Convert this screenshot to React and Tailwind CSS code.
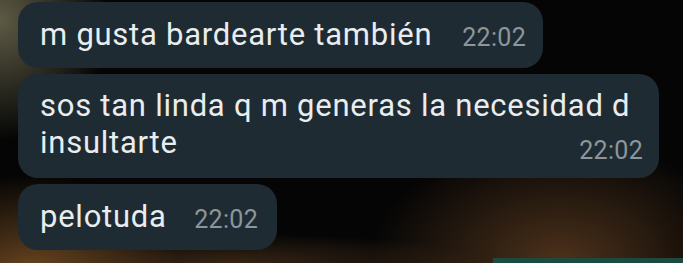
import React from "react";

const bg =
  "bg-[radial-gradient(ellipse_110px_120px_at_0px_20px,rgba(98,95,72,0.95),transparent),radial-gradient(ellipse_150px_100px_at_30px_275px,rgba(130,85,38,0.8),transparent),radial-gradient(ellipse_190px_120px_at_560px_260px,rgba(100,64,34,0.75),transparent),radial-gradient(ellipse_60px_70px_at_683px_250px,rgba(0,0,0,0.9),transparent),radial-gradient(ellipse_260px_30px_at_230px_263px,rgba(95,62,35,0.55),transparent),linear-gradient(#050505,#050505)]";

const Time = ({ children }) => (
  <span className="text-[25px] leading-[16px] tracking-[0.3px] text-[#8d969b] whitespace-nowrap">
    {children}
  </span>
);

const msgText = "text-[31px] leading-[37px] tracking-[0.75px] text-[#e9edef]";

export default function App() {
  return (
    <div
      className={`relative w-[683px] h-[263px] overflow-hidden ${bg}`}
      style={{ fontFamily: "Roboto, 'Liberation Sans', sans-serif" }}
    >
      <div className="flex flex-col items-start gap-[6px] pl-[18px] pt-[2px]">
        {/* first message */}
        <div className="flex items-end w-[525px] h-[66px] rounded-[20px] bg-[#1f2b32] pl-[22px] pr-[17px] pt-[13px] pb-[15px]">
          <span className={msgText}>m gusta bardearte también</span>
          <span className="ml-auto">
            <Time>22:02</Time>
          </span>
        </div>

        {/* second message */}
        <div className="flex flex-col w-[641px] h-[104px] rounded-[20px] bg-[#1f2b32] pl-[22px] pr-[16px] pt-[13px]">
          <div className={msgText}>sos tan linda q m generas la necesidad d</div>
          <div className="flex items-end justify-between">
            <span className={msgText}>insultarte</span>
            <span className="translate-y-[5px]">
              <Time>22:02</Time>
            </span>
          </div>
        </div>

        {/* third message */}
        <div className="flex items-end w-[259px] h-[66px] rounded-[20px] bg-[#1f2b32] pl-[22px] pr-[19px] pt-[13px] pb-[15px]">
          <span className={msgText}>pelotuda</span>
          <span className="ml-auto">
            <Time>22:02</Time>
          </span>
        </div>
      </div>

      {/* green strip at the bottom edge */}
      <div className="absolute bottom-0 right-0 w-[190px] h-[5px] bg-[#1d4a3f]" />
    </div>
  );
}
